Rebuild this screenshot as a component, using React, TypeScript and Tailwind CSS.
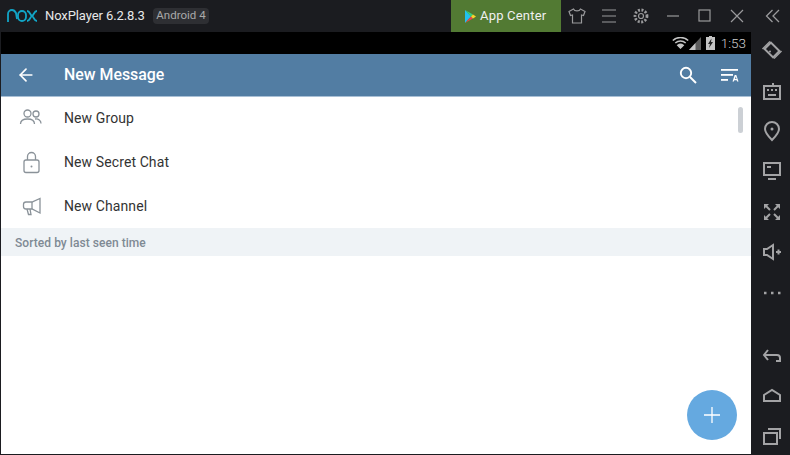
import { ArrowLeft } from "lucide-react";

const TopIcon = ({ children }: { children: React.ReactNode }) => (
  <div className="w-8 h-8 flex items-center justify-center">
    <svg width="20" height="20" viewBox="0 0 20 20" fill="none" stroke="#9a9a9c" strokeWidth="1.2">
      {children}
    </svg>
  </div>
);

const SideIcon = ({ children, className = "" }: { children: React.ReactNode; className?: string }) => (
  <div className={"w-full h-[40.4px] flex items-center justify-center shrink-0 " + className}>
    <svg width="22" height="22" viewBox="0 0 22 22" fill="none" stroke="#a3a3a5" strokeWidth="2">
      {children}
    </svg>
  </div>
);

const rows = [
  {
    label: "New Group",
    icon: (
      <>
        <circle cx="8.5" cy="7.5" r="3.5" />
        <circle cx="17" cy="8" r="3" />
        <path d="M1.5 18c0-3.5 3-5 7-5s7 1.500 7 5" />
        <path d="M16 13c3.500-.5 6 1.500 6 4.500" />
      </>
    ),
  },
  {
    label: "New Secret Chat",
    icon: (
      <>
        <rect x="5" y="10" width="15" height="12.500" rx="2" />
        <path d="M8.500 10V6.500a4 4 0 0 1 8 0V10" />
        <circle cx="12.500" cy="16.500" r="1" fill="#8a9299" stroke="none" />
      </>
    ),
  },
  {
    label: "New Channel",
    icon: (
      <>
        <path d="M21 4.500v14.500l-8-4H7a2.500 2.500 0 0 1-2.500-2.500v-2A2.500 2.500 0 0 1 7 8h6z" />
        <path d="M13 8v7" />
        <path d="M8 15l1.500 5.500h2.500l-1-5.500" />
      </>
    ),
  },
];

export default function App() {
  return (
    <div className="w-[790px] h-[455px] flex flex-col bg-[#1b1c20] overflow-hidden font-['Roboto',sans-serif]">
      <div className="h-8 flex items-center shrink-0">
        <svg className="ml-[7px]" width="31" height="14" viewBox="0 0 31 14" fill="none" stroke="#12a5c6" strokeWidth="1.800">
          <path d="M1 13V5a4 4 0 0 1 4-4c2 0 3 1 4 3l1 6" />
          <rect x="11" y="2" width="8" height="10" rx="4" />
          <path d="M20 2c3 0 3 4 5 5s2 5 5 5M30 2c-3 0-3 4-5 5s-2 5-5 5" />
        </svg>
        <span className="ml-[7px] w-[108px] whitespace-nowrap text-[13px] text-[#e8e8e8] tracking-[-0.1px]">NoxPlayer 6.2.8.3</span>
        <span className="w-[56px] h-4 rounded-sm bg-[#2e2f33] text-[#a9a9a9] text-[11.500px] flex items-center justify-center">
          Android 4
        </span>
        <div className="ml-[242px] w-[110px] h-8 bg-[#527a33] flex items-center pl-[14px]">
          <svg width="11" height="13" viewBox="0 0 11 13">
            <path d="M0 0l6 6.500L0 13z" fill="#22c1ee" />
            <path d="M0 0l8 4.500-2 2z" fill="#35d07f" />
            <path d="M0 13l8-4.500-2-2z" fill="#e8454d" />
            <path d="M8 4.500l3 2-3 2-2-2z" fill="#f9d52b" />
          </svg>
          <span className="ml-[4px] text-[13px] text-[#f0f0f0] tracking-[0.2px]">App Center</span>
        </div>
        <div className="flex">
          <TopIcon>
            <path d="M6.500 3L2 5.500l1.500 4L5.500 9v8h9V9l2 .5 1.500-4L13.500 3c-1 2.500-6 2.500-7 0z" />
          </TopIcon>
          <TopIcon>
            <path d="M3 4h14M3 10h14M3 16h14" />
          </TopIcon>
          <TopIcon>
            <circle cx="10" cy="10" r="2.500" />
            <circle cx="10" cy="10" r="6" strokeWidth="2.800" strokeDasharray="2 1.500" />
          </TopIcon>
          <TopIcon>
            <path d="M4 10h12" />
          </TopIcon>
          <TopIcon>
            <rect x="4" y="4" width="11" height="11" />
          </TopIcon>
          <TopIcon>
            <path d="M4 4l12 12M16 4L4 16" />
          </TopIcon>
        </div>
        <svg className="ml-[12px]" width="16" height="14" viewBox="0 0 16 14" fill="none" stroke="#9a9a9c" strokeWidth="1.300">
          <path d="M7.500 1L1.500 7l6 6M14 1L8 7l6 6" />
        </svg>
      </div>

      <div className="flex-1 flex min-h-0">
        <div className="relative flex-1 ml-px mb-px bg-white flex flex-col">
          <div className="h-[22px] bg-black flex items-center justify-end pr-[5px] shrink-0">
            <svg width="17" height="12" viewBox="0 0 17 12" fill="none" stroke="#c4c4c4" strokeWidth="1.500">
              <path d="M.8 3.500C5-.5 12-.5 16.200 3.500" />
              <path d="M3.300 6c3-2.800 7.400-2.800 10.400 0" />
              <path d="M5.800 8.300c1.800-1.500 3.600-1.500 5.400 0L8.500 11z" fill="#c4c4c4" />
            </svg>
            <svg width="12" height="13" viewBox="0 0 12 13">
              <path d="M0 13L12 0v13z" fill="#5c5c5c" />
              <path d="M0 13l6.500-7v7z" fill="#c4c4c4" />
            </svg>
            <svg className="ml-[5px]" width="9" height="14" viewBox="0 0 9 14">
              <path d="M3 0h3v1h3v13H0V1h3z" fill="#c4c4c4" />
              <path d="M5.500 2.500L2 8h2l-1 4 4-6H5z" fill="#222" />
            </svg>
            <span className="ml-[6px] text-[13.500px] text-[#d0d0d0] font-light">1:53</span>
          </div>
          <div className="relative h-[42px] bg-[#527da3] shadow-[0_1px_0_#a9c0d6] flex items-center text-white shrink-0">
            <ArrowLeft className="ml-[15px]" size={20} strokeWidth={2} />
            <span className="ml-[28px] text-[15.900px] font-medium">New Message</span>
            <svg className="ml-auto" width="18" height="18" viewBox="0 0 18 18" fill="none" stroke="white" strokeWidth="1.900">
              <circle cx="7" cy="7" r="5.200" />
              <path d="M11 11l6 6" />
            </svg>
            <svg className="ml-[24px] mr-[11px]" width="19" height="14" viewBox="0 0 19 14" fill="white">
              <rect x="0" y="1" width="17" height="1.800" />
              <rect x="0" y="6" width="12" height="1.800" />
              <rect x="0" y="11" width="7" height="1.800" />
              <path d="M11.500 13.500l2.200-6.500h1.600l2.200 6.500h-1.400l-.4-1.300h-2.400l-.4 1.300zM14 11h1.600l-.8-2.500z" />
            </svg>
          </div>

          {rows.map((r) => (
            <div key={r.label} className="h-11 flex items-center shrink-0">
              <svg className="ml-[18px]" width="24" height="24" viewBox="0 0 24 24" fill="none" stroke="#8a9299" strokeWidth="1.300">
                {r.icon}
              </svg>
              <span className="ml-[21px] text-[14px] text-[#333] tracking-[0.1px]">{r.label}</span>
            </div>
          ))}
          <div className="h-7 bg-[#eff3f6] flex items-center pl-[14px] pt-px text-[12px] text-[#7f8a94] font-medium tracking-[0.05px] shrink-0">
            Sorted by last seen time
          </div>

          <div className="absolute left-[737px] top-[75px] w-[5px] h-[26px] rounded-full bg-[#ccd0d5]" />
          <button className="absolute left-[686px] top-[358px] w-[50px] h-[50px] rounded-full bg-[#65a9e0] flex items-center justify-center">
            <svg width="16" height="16" viewBox="0 0 16 16" stroke="white" strokeWidth="1.300">
              <path d="M8 0v16M0 8h16" />
            </svg>
          </button>
        </div>

        <div className="w-[39px] flex flex-col items-center shrink-0 -mt-[2px] -mb-[1px] pl-[2px]">
          <SideIcon>
            <rect x="5" y="6.500" width="12" height="9" transform="rotate(45 11 11)" />
            <path d="M20.500 12L13 19.500M1.500 10L9 2.500" strokeWidth="1.500" />
            <circle cx="9" cy="12.500" r="1" fill="#a3a3a5" stroke="none" />
          </SideIcon>
          <SideIcon>
            <rect x="3" y="6" width="16" height="13" />
            <path d="M12 6V3M6 10h2M10 10h2M14 10h2M7 15h8" />
          </SideIcon>
          <SideIcon>
            <path d="M11 20c-4-4-7-7-7-11a7 7 0 0 1 14 0c0 4-3 7-7 11z" />
            <circle cx="11" cy="9" r="1.500" fill="#a3a3a5" stroke="none" />
          </SideIcon>
          <SideIcon>
            <rect x="3" y="3" width="16" height="12" />
            <path d="M6 7h4M7 19h8" />
          </SideIcon>
          <SideIcon>
            <path d="M3 3h5l-5 5zM19 3h-5l5 5zM3 19h5l-5-5zM19 19h-5l5-5z" fill="#a3a3a5" stroke="none" />
            <path d="M5 5l4 4M17 5l-4 4M5 17l4-4M17 17l-4-4" />
          </SideIcon>
          <SideIcon>
            <path d="M3 8h3l6-4v14l-6-4H3z" />
            <path d="M15 11h5M17.500 8.500v5" />
          </SideIcon>
          <SideIcon>
            <path d="M3 11h2.500M10 11h2.500M17 11h2.500" strokeWidth="2.500" />
          </SideIcon>
          <div className="flex-1" />
          <SideIcon>
            <path d="M7 6l-4 5 4 5" />
            <path d="M3 11h13a3 3 0 0 1 3 3v3h-4" />
          </SideIcon>
          <SideIcon>
            <path d="M3 17v-6l8-5 8 5v6z" />
          </SideIcon>
          <SideIcon>
            <rect x="3" y="8" width="13" height="11" />
            <path d="M7 4h12v10" />
          </SideIcon>
        </div>
      </div>
    </div>
  );
}
